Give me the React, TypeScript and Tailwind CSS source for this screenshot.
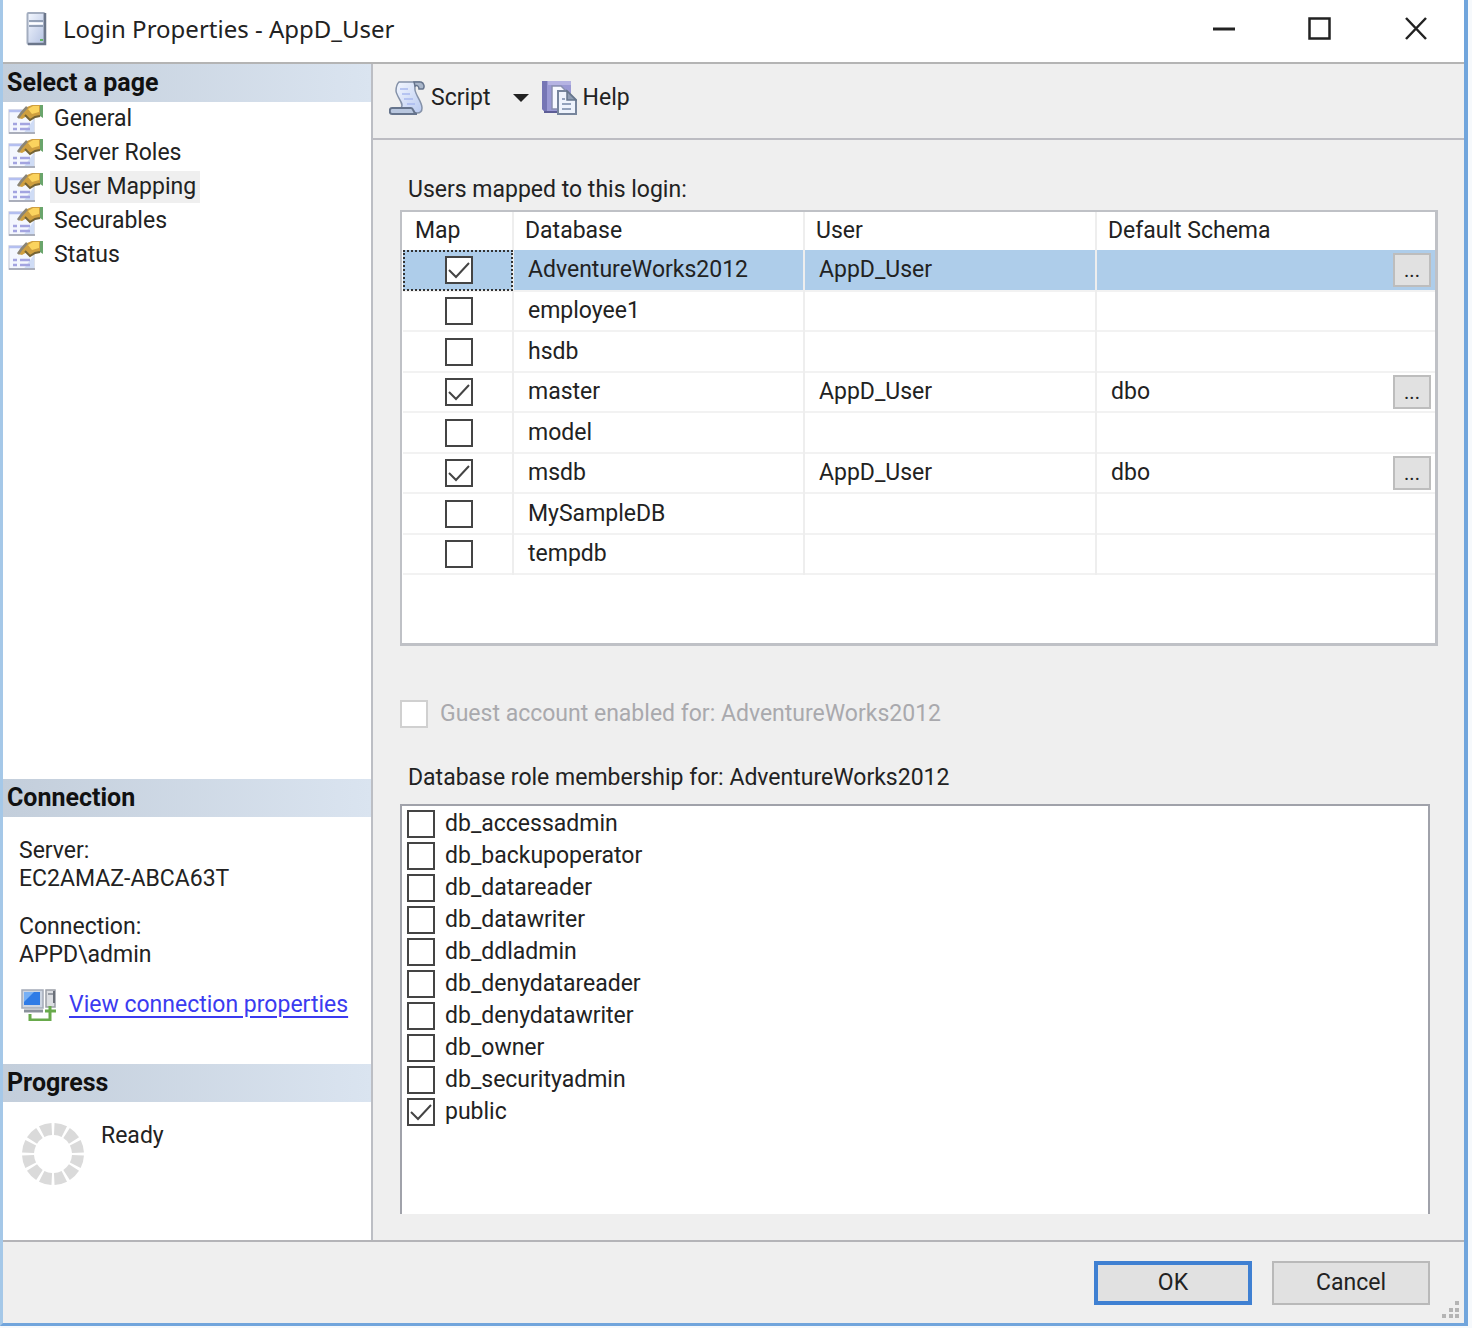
import React, { useState } from 'react';

const pages = ['General', 'Server Roles', 'User Mapping', 'Securables', 'Status'];

const databases = [
  { name: 'AdventureWorks2012', mapped: true, user: 'AppD_User', schema: '' },
  { name: 'employee1', mapped: false, user: '', schema: '' },
  { name: 'hsdb', mapped: false, user: '', schema: '' },
  { name: 'master', mapped: true, user: 'AppD_User', schema: 'dbo' },
  { name: 'model', mapped: false, user: '', schema: '' },
  { name: 'msdb', mapped: true, user: 'AppD_User', schema: 'dbo' },
  { name: 'MySampleDB', mapped: false, user: '', schema: '' },
  { name: 'tempdb', mapped: false, user: '', schema: '' },
];

const roles = [
  'db_accessadmin',
  'db_backupoperator',
  'db_datareader',
  'db_datawriter',
  'db_ddladmin',
  'db_denydatareader',
  'db_denydatawriter',
  'db_owner',
  'db_securityadmin',
  'public',
];

function App() {
  const [page, setPage] = useState('User Mapping');

  return (
    <div className="min-h-screen flex flex-col bg-[#f6f9fc] pr-1 pb-0.5 font-['Roboto','Liberation_Sans',sans-serif] text-[23px] leading-7 text-[#222]">
      <div className="flex-1 flex flex-col bg-[#efefef] border-l-3 border-l-[#a5c8e8] border-r-4 border-r-[#71a5dc] border-b-3 border-b-[#71a5dc]">
        <TitleBar />
        <div className="flex-1 flex border-b-2 border-[#b4b4b8]">
          <aside className="w-[370px] shrink-0 flex flex-col bg-white border-r-2 border-[#bcbec4]">
            <PanelHeader title="Select a page" />
            <nav className="flex-1 px-1">
              {pages.map((name) => (
                <button
                  key={name}
                  type="button"
                  onClick={() => setPage(name)}
                  className="flex h-[34px] w-full items-center gap-1.5 text-left"
                >
                  <PropertiesIcon />
                  <span className={name === page ? 'bg-[#efefef] px-1 py-0.5' : 'px-1 py-0.5'}>{name}</span>
                </button>
              ))}
            </nav>

            <PanelHeader title="Connection" />
            <div className="h-[247px] px-4 pt-5">
              <p>Server:</p>
              <p>EC2AMAZ-ABCA63T</p>
              <p className="mt-5">Connection:</p>
              <p>APPD\admin</p>
              <div className="mt-5 flex items-center gap-3">
                <ConnectionIcon />
                <a
                  href="#connection"
                  className="whitespace-nowrap text-[#3b3bf0] underline underline-offset-4 decoration-2"
                >
                  View connection properties
                </a>
              </div>
            </div>

            <PanelHeader title="Progress" />
            <div className="flex h-[138px] gap-4 px-4 pt-5">
              <ProgressRing />
              <p>Ready</p>
            </div>
          </aside>

          <main className="flex-1 flex flex-col">
            <div className="flex h-[76px] items-center border-b-2 border-[#bcbcc2] px-4 pb-1.5">
              <button type="button" className="flex items-center gap-1.5">
                <ScriptIcon />
                Script
                <svg className="ml-4 w-4 h-2" viewBox="0 0 16 8">
                  <path d="M0 0h16L8 8z" fill="#222" />
                </svg>
              </button>
              <button type="button" className="ml-3 flex items-center gap-1.5">
                <HelpIcon />
                Help
              </button>
            </div>

            <div className="flex-1 flex flex-col pl-[27px] pr-[26px] pb-[26px] pt-9">
              <h2 className="px-2">Users mapped to this login:</h2>
              <UserTable />

              <label className="mt-[54px] flex items-center gap-3 text-[#a9a9ad]">
                <CheckBox disabled />
                Guest account enabled for: AdventureWorks2012
              </label>

              <h2 className="mt-9 px-2">Database role membership for: AdventureWorks2012</h2>
              <ul className="mt-3 mr-2 flex-1 border-2 border-b-0 border-[#a0a2aa] bg-white px-[5px] pt-0.5">
                {roles.map((role) => (
                  <li key={role}>
                    <label className="flex h-8 items-center gap-2.5">
                      <CheckBox defaultChecked={role === 'public'} />
                      {role}
                    </label>
                  </li>
                ))}
              </ul>
            </div>
          </main>
        </div>

        <footer className="relative flex h-[81px] justify-end gap-5 px-[34px] pt-[19px]">
          <button type="button" className="h-11 w-[158px] border-4 border-[#3f80d2] bg-[#e1e1e1]">
            OK
          </button>
          <button type="button" className="h-11 w-[158px] border-2 border-[#b9b9b9] bg-[#e1e1e1]">
            Cancel
          </button>
          <svg className="absolute bottom-1 right-1 h-[18px] w-[18px]" viewBox="0 0 18 18" fill="#b4b4b4">
            <path d="M13 0h4v4h-4zM7 7h4v4H7zM13 7h4v4h-4zM0 13h4v4H0zM7 13h4v4H7zM13 13h4v4h-4z" />
          </svg>
        </footer>
      </div>
    </div>
  );
}

function TitleBar() {
  return (
    <header className="flex h-[64px] items-center border-b-2 border-[#b4b4b4] bg-white pl-5 pb-1">
      <ServerIcon />
      <h1 className="ml-4 flex-1 font-['Noto_Sans','Open_Sans',sans-serif] text-2xl">Login Properties - AppD_User</h1>
      <div className="flex text-[#222]">
        <button type="button" aria-label="Minimize" className="flex h-14 w-24 items-center justify-center">
          <svg width="24" height="24" viewBox="0 0 24 24">
            <path d="M1 12h22" stroke="currentColor" strokeWidth="3" />
          </svg>
        </button>
        <button type="button" aria-label="Maximize" className="flex h-14 w-24 items-center justify-center">
          <svg width="24" height="24" viewBox="0 0 24 24" fill="none">
            <path d="M1.500 1.500h20v20h-20z" stroke="currentColor" strokeWidth="2.5" />
          </svg>
        </button>
        <button type="button" aria-label="Close" className="flex h-14 w-24 items-center justify-center">
          <svg width="24" height="24" viewBox="0 0 24 24">
            <path d="M2 1l20 21M22 1L2 22" stroke="currentColor" strokeWidth="2.5" />
          </svg>
        </button>
      </div>
    </header>
  );
}

function PanelHeader({ title }: { title: string }) {
  return (
    <h2 className="h-[38px] shrink-0 bg-linear-to-r from-[#c3cedb] to-[#dae4f0] px-1 text-[25px] leading-[38px] font-bold text-[#111]">
      {title}
    </h2>
  );
}

function CheckBox(props: React.InputHTMLAttributes<HTMLInputElement>) {
  return (
    <span className="inline-grid shrink-0">
      <input
        type="checkbox"
        className="peer col-start-1 row-start-1 h-7 w-7 appearance-none border-2 border-[#444] bg-white disabled:border-[#d0d0d0]"
        {...props}
      />
      <svg
        className="pointer-events-none invisible col-start-1 row-start-1 h-7 w-7 peer-checked:visible"
        viewBox="0 0 28 28"
        fill="none"
      >
        <path d="M4 14l7 7L24 7" stroke="#444" strokeWidth="2" />
      </svg>
    </span>
  );
}

function UserTable() {
  return (
    <div className="mt-1.5 h-[436px] border-2 border-r-3 border-b-3 border-[#bfc1c6] bg-white pl-px">
      <table className="w-full table-fixed border-collapse text-left">
        <thead>
          <tr className="h-[38px]">
            <th className="w-[110px] border-r-2 border-[#eee] py-0 pl-3 font-normal">Map</th>
            <th className="w-[291px] border-r-2 border-[#eee] py-0 pl-[11px] font-normal">Database</th>
            <th className="w-[292px] border-r-2 border-[#eee] py-0 pl-[11px] font-normal">User</th>
            <th className="py-0 pl-[11px] font-normal">Default Schema</th>
          </tr>
        </thead>
        <tbody>
          {databases.map((db, i) => (
            <tr
              key={db.name}
              className={
                i === 0
                  ? 'h-[41px] border-b-2 border-[#f2f2f2] bg-[#aecdea]'
                  : 'h-[41px] border-b-2 border-[#f2f2f2] even:h-[40px]'
              }
            >
              <td
                className={
                  i === 0
                    ? 'border-r-2 border-[#eee] p-0 outline-2 -outline-offset-2 outline-dotted outline-[#333]'
                    : 'border-r-2 border-[#eee] p-0'
                }
              >
                <div className="flex justify-center pl-0.5">
                  <CheckBox defaultChecked={db.mapped} aria-label={`Map ${db.name}`} />
                </div>
              </td>
              <td className="border-r-2 border-[#eee] py-0 pl-3.5">{db.name}</td>
              <td className="border-r-2 border-[#eee] py-0 pl-3.5">{db.user}</td>
              <td className="py-0 pl-3.5 pr-1">
                <div className="flex items-center justify-between">
                  <span>{db.schema}</span>
                  {db.mapped && (
                    <button
                      type="button"
                      aria-label={`Browse schema for ${db.name}`}
                      className="h-[34px] w-[38px] border-2 border-[#bdbdbd] bg-[#e1e1e1] text-xl leading-7"
                    >
                      ...
                    </button>
                  )}
                </div>
              </td>
            </tr>
          ))}
        </tbody>
      </table>
    </div>
  );
}

function ServerIcon() {
  return (
    <svg className="h-9 w-6 shrink-0" viewBox="0 0 24 36">
      <defs>
        <linearGradient id="server" x1="0" y1="0" x2="1" y2="1">
          <stop offset="0" stopColor="#f4f8ff" />
          <stop offset="1" stopColor="#b4c2e2" />
        </linearGradient>
      </defs>
      <rect x="4.5" y="2" width="17" height="31" rx="1" fill="url(#server)" stroke="#a3adbf" strokeWidth="2" />
      <path d="M22 2v31H5" fill="none" stroke="#6b768a" strokeWidth="2.5" />
      <path d="M6 10h14M6 15h14" stroke="#7c8aa2" strokeWidth="1.5" />
      <path d="M6 12.5h14" stroke="#fff" strokeWidth="2" />
      <path d="M17 29h3" stroke="#62b562" strokeWidth="2" />
    </svg>
  );
}

function PropertiesIcon() {
  return (
    <svg className="ml-px h-8 w-9 shrink-0" viewBox="0 0 36 32">
      <rect x="1" y="7" width="25" height="23" fill="#f4f7fe" stroke="#d3d7e2" strokeWidth="1.5" />
      <path d="M16 29.5h10V16z" fill="#cfdcf5" />
      <path d="M1 8h13" stroke="#b4bff0" strokeWidth="2.5" />
      <path d="M1 30h26" stroke="#9a9eab" strokeWidth="1.5" />
      <path d="M5 21h4M5 26h4M12 21h10M12 26h10" stroke="#a3a4e0" strokeWidth="2.5" />
      <path d="M10 15c3-5 6-8 9-11l5-2h8v11l-5 1-4 3-4-4-5 3z" fill="#cf9f3f" />
      <path d="M10 15c3-5 6-8 9-11" fill="none" stroke="#8b8575" strokeWidth="2.5" />
      <path d="M20 6l5-3h6v6l-7 2z" fill="#fbd35e" />
      <path d="M17 12l5 5 5-3 5-1" fill="none" stroke="#756333" strokeWidth="2" />
      <path d="M32 2h3v13l-3-2z" fill="#6aa56c" />
    </svg>
  );
}

function ScriptIcon() {
  return (
    <svg className="h-9 w-9 shrink-0" viewBox="0 0 36 36">
      <defs>
        <linearGradient id="paper" x1="0" y1="0" x2="1" y2="1">
          <stop offset="0" stopColor="#f3f7ff" />
          <stop offset="1" stopColor="#b9caf0" />
        </linearGradient>
      </defs>
      <path
        d="M10 2h21c-4 1-6 4-5 8 1 6 7 12 7 18 0 3-2 5-5 5H14l-2-5c4-4-4-10-5-17 0-4 1-7 3-9z"
        fill="url(#paper)"
        stroke="#8491a8"
        strokeWidth="1.5"
      />
      <path d="M25 2h7c3 1 4 5 2 7h-4c0-3-2-4-4-3z" fill="#aab7ca" stroke="#66748c" strokeWidth="1.5" />
      <path d="M3 28h19c3 0 2 6 6 6H3c-3 0-3-6 0-6z" fill="#b9c7df" stroke="#66748c" strokeWidth="2" />
      <path d="M11 9h8M13 14h8M15 19h9M18 24h8" stroke="#a9b9ee" strokeWidth="1.5" />
    </svg>
  );
}

function HelpIcon() {
  return (
    <svg className="h-9 w-9 shrink-0" viewBox="0 0 36 36">
      <path d="M1 1h29v31H4l-3-3z" fill="#9a99d4" />
      <path d="M1 1h5v31H4l-3-3z" fill="#7676b5" />
      <path d="M7 1h23v4H7z" fill="#b5b3e2" />
      <path d="M3 32h15" stroke="#5d5d96" strokeWidth="2" />
      <path d="M11 6h9l4 4v19H11z" fill="#f7f9ff" stroke="#8a90b0" strokeWidth="1.5" />
      <path d="M17 11h9l9 9v14H17z" fill="#eef3fc" stroke="#77859c" strokeWidth="2" />
      <path d="M26 11v9h9z" fill="#8f9db3" stroke="#66758c" strokeWidth="1.5" />
      <path d="M21 19h3M21 24h9M21 29h9" stroke="#93a2bc" strokeWidth="2" />
    </svg>
  );
}

function ConnectionIcon() {
  return (
    <svg className="ml-0.5 h-8 w-9 shrink-0" viewBox="0 0 36 32">
      <rect x="25" y="1" width="9" height="17" fill="#dcdee2" stroke="#9a9ea6" strokeWidth="1.5" />
      <path d="M27 5h5" stroke="#80868f" strokeWidth="1.5" />
      <path d="M33 2v12" stroke="#6a6f78" strokeWidth="2" />
      <rect x="1" y="1" width="21" height="18" fill="#cdd5e2" stroke="#a4abb8" strokeWidth="1.5" />
      <rect x="3" y="3" width="16" height="13" fill="#2f7be6" />
      <path d="M3 3h10L3 13z" fill="#77b0f5" />
      <path d="M3 22h19" stroke="#8b919c" strokeWidth="3" />
      <path d="M9 25v6h20V17M24 22h11" fill="none" stroke="#68aa4b" strokeWidth="3" />
    </svg>
  );
}

function ProgressRing() {
  return (
    <svg className="ml-0.5 h-16 w-16 shrink-0" viewBox="0 0 64 64">
      <circle
        cx="32"
        cy="32"
        r="25"
        fill="none"
        stroke="#dadada"
        strokeWidth="12"
        pathLength="120"
        strokeDasharray="8 2"
        strokeDashoffset="-1"
      />
    </svg>
  );
}

export default App;
